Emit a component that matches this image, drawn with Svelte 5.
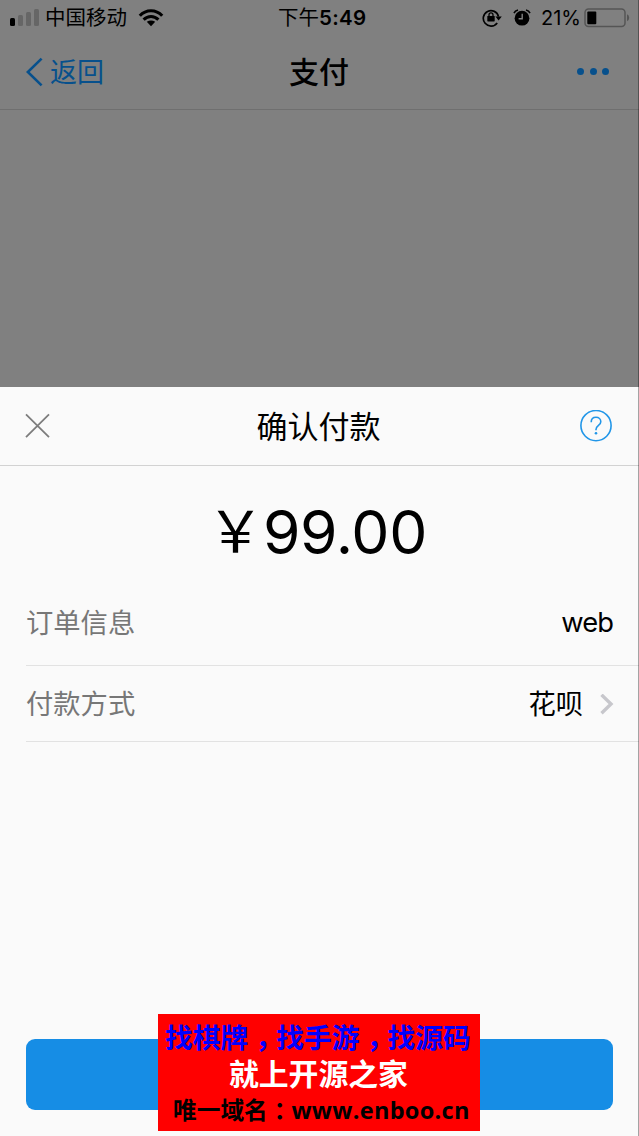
<script lang="ts">
  interface Row {
    label: string;
    value: string;
    link?: boolean;
  }

  const rows: Row[] = [
    { label: '订单信息', value: 'web' },
    { label: '付款方式', value: '花呗', link: true },
  ];

  const bars = [8, 11, 14, 17];
</script>

<div class="screen">
  <div class="backdrop">
    <div class="status">
      <div class="signal">
        {#each bars as height, i}
          <i class:on={i === 0} style="height: {height}px"></i>
        {/each}
      </div>
      <span class="carrier">中国移动</span>
      <svg class="wifi" width="26" height="18" viewBox="0 0 26 18">
        <g fill="none" stroke="#000" stroke-width="3.1">
          <path d="M1.8 6.7C8 0 18 0 24.2 6.7" />
          <path d="M5.6 10.7C10 6.4 16 6.4 20.4 10.7" />
        </g>
        <path d="M8.8 12.8Q13 10 17.2 12.8L13 17.2Z" />
      </svg>
      <span class="time">下午<b>5:49</b></span>
      <svg class="lock" width="20" height="20" viewBox="0 0 20 20">
        <path d="M15.2 14.9A7.7 7.7 0 1 1 16.5 8.6" fill="none" stroke="#000" stroke-width="1.7" />
        <path d="M13.4 8.6h6.4l-3.2 4z" />
        <rect x="5.3" y="8" width="7.4" height="5.4" rx=".6" />
        <path d="M7 8.6V6.8a2 2 0 0 1 4 0v1.8" fill="none" stroke="#000" stroke-width="1.3" />
      </svg>
      <svg class="alarm" width="18" height="18" viewBox="0 0 18 18">
        <circle cx="9" cy="9.2" r="7.4" />
        <path d="M1 4.1Q2 1.6 5 1M17 4.1Q16 1.6 13 1" fill="none" stroke="#000" stroke-width="1.6" />
        <path d="M9.2 4.8v5H5.6" fill="none" stroke="#808080" stroke-width="1.4" />
      </svg>
      <span class="percent">21%</span>
      <svg class="battery" width="46" height="20" viewBox="0 0 46 20">
        <rect x="1" y="1" width="40" height="17.6" rx="3.5" fill="none" stroke="#555" stroke-width="1.5" />
        <rect x="3.3" y="3.5" width="9" height="12.8" rx="1" />
        <path d="M43 6.3Q45.2 7.2 45.2 9.8T43 13.3Z" fill="#555" />
      </svg>
    </div>

    <div class="navbar">
      <div class="back">
        <svg width="18" height="30" viewBox="0 0 18 30">
          <path d="M15.6 1.6 1.8 15 15.6 28.4" fill="none" stroke="#07508c" stroke-width="2.6" />
        </svg>
        <span>返回</span>
      </div>
      <span class="page-title">支付</span>
      <div class="dots"><i></i><i></i><i></i></div>
    </div>
  </div>

  <div class="sheet">
    <div class="sheet-head">
      <svg class="close" width="26" height="26" viewBox="0 0 26 26">
        <path d="M1 1.3 24 24.2M24 1.3 1 24.2" stroke="#7d7d7d" stroke-width="1.8" />
      </svg>
      <span class="sheet-title">确认付款</span>
      <svg class="help" width="32" height="32" viewBox="0 0 32 32">
        <g fill="none" stroke="#2196e8" stroke-width="1.6">
          <circle cx="16" cy="15.6" r="15.1" />
          <path d="M11.2 12.2C11.2 9 13.2 7.3 16 7.3S20.8 9.2 20.8 11.8C20.8 15.6 16 15.4 16 19.6V20.3" />
        </g>
        <circle cx="16" cy="23.3" r="1.3" fill="#2196e8" />
      </svg>
    </div>

    <div class="amount"><span class="yen">￥</span><span class="sum">99.00</span></div>

    {#each rows as row}
      <div class="row" class:link={row.link}>
        <span class="label">{row.label}</span>
        <span class="value">{row.value}</span>
        {#if row.link}
          <svg width="14" height="22" viewBox="0 0 14 22">
            <path d="M1.5 .8 11 10 1.5 19.2" fill="none" stroke="#c7c7cc" stroke-width="3.4" />
          </svg>
        {/if}
      </div>
    {/each}

    <button class="pay" type="button" aria-label="付款"></button>
  </div>

  <div class="promo">
    <div class="promo-find">找棋牌<i>，</i>找手游<i>，</i>找源码</div>
    <div class="promo-name">就上开源之家</div>
    <div class="promo-url">唯一域名<i>：</i><span>www.enboo.cn</span></div>
  </div>
  <div class="edge"></div>
</div>

<style>
  :global(body) {
    background: #fafafa;
  }

  .screen {
    position: relative;
    display: flex;
    flex-direction: column;
    width: 639px;
    height: 1136px;
    overflow: hidden;
    font-family: Inter, 'Noto Sans CJK SC', sans-serif;
    color: #000;
    white-space: nowrap;
  }

  .backdrop {
    height: 387px;
    background: #808080;
  }

  .status {
    display: flex;
    align-items: center;
    height: 35px;
    padding-left: 10px;
    font-size: 20.5px;
    line-height: 36px;
  }

  .signal {
    display: flex;
    align-items: flex-end;
    gap: 3px;
    width: 29px;
    height: 17px;
  }

  .signal i {
    width: 5px;
    border-radius: 1.5px;
    background: #666;
  }

  .signal i.on {
    background: #000;
  }

  .carrier {
    margin-left: 6px;
    width: 82px;
  }

  .wifi {
    margin-left: 11px;
  }

  .time {
    width: 90px;
    margin-left: 114px;
  }

  .time b {
    font-size: 20.5px;
    font-weight: 600;
    letter-spacing: 0.3px;
  }

  .lock {
    margin-left: 114px;
  }

  .alarm {
    margin-left: 11px;
  }

  .percent {
    width: 39px;
    margin-left: 10px;
    font-size: 20px;
  }

  .battery {
    margin-left: 4px;
  }

  .navbar {
    display: grid;
    grid-template-columns: 1fr auto 1fr;
    align-items: center;
    height: 74px;
    border-bottom: 1px solid #6f6f6f;
  }

  .back {
    display: flex;
    align-items: center;
    gap: 6px;
    padding-left: 26px;
    font-size: 27px;
    line-height: 40px;
    color: #07508c;
  }

  .back span {
    padding-top: 1px;
  }

  .page-title {
    margin-right: 1px;
    font-size: 30px;
    font-weight: 500;
    line-height: 40px;
  }

  .dots {
    display: flex;
    justify-content: flex-end;
    gap: 5.5px;
    padding: 0 30px 1px 0;
  }

  .dots i {
    width: 7px;
    height: 7px;
    border-radius: 50%;
    background: #07508c;
  }

  .sheet {
    display: flex;
    flex-direction: column;
    height: 749px;
    background: #fafafa;
  }

  .sheet-head {
    display: grid;
    grid-template-columns: 1fr auto 1fr;
    align-items: center;
    height: 78px;
    padding: 0 27px 0 25px;
    border-bottom: 1px solid #d2d2d2;
  }

  .sheet-title {
    padding-top: 1px;
    font-size: 31px;
    line-height: 44px;
  }

  .help {
    justify-self: end;
  }

  .amount {
    display: flex;
    align-items: center;
    justify-content: center;
    height: 115px;
    padding: 16px 5px 0 0;
    box-sizing: border-box;
    font-size: 60.5px;
    line-height: 80px;
  }

  .yen {
    margin-right: -1px;
    font-size: 57px;
  }

  .sum {
    letter-spacing: -0.3px;
  }

  .row {
    display: flex;
    align-items: center;
    height: 85px;
    margin-left: 26px;
    padding: 2px 26px 0 0;
    box-sizing: border-box;
    border-bottom: 1px solid #e2e2e2;
    font-size: 27.3px;
    line-height: 40px;
  }

  .row:not(.link) .value {
    padding-bottom: 2px;
    letter-spacing: -0.9px;
  }

  .row.link {
    height: 76px;
    padding-right: 25px;
  }

  .label {
    flex: 1;
    color: #777;
  }

  .row svg {
    margin-left: 17px;
  }

  .pay {
    height: 71px;
    margin: auto 26px 26px;
    padding: 0;
    border: 0;
    border-radius: 9px;
    background: #168de5;
  }

  /* banner lies over the pay button */
  .promo {
    position: absolute;
    left: 158px;
    top: 1014px;
    width: 322px;
    height: 117px;
    background: #f00;
    font-family: 'Noto Sans CJK SC', sans-serif;
    font-weight: 700;
  }

  /* half-width punctuation, centred in a full-width cell */
  .promo i {
    display: inline-block;
    width: 1em;
    text-align: center;
    font-style: normal;
    font-feature-settings: 'halt';
  }

  .promo-find {
    padding-left: 7px;
    font-size: 27.8px;
    line-height: 45px;
    color: #00f;
  }

  .promo-name {
    margin-top: -2px;
    padding-left: 71px;
    font-size: 29.8px;
    line-height: 30px;
    color: #fff;
  }

  .promo-url {
    padding-left: 15px;
    font-size: 23.7px;
    line-height: 44px;
  }

  .promo-url span {
    font-family: 'Open Sans', sans-serif;
    font-size: 23.5px;
    letter-spacing: 0.3px;
  }

  .edge {
    position: absolute;
    top: 0;
    right: 0;
    width: 1px;
    height: 100%;
    background: rgba(0, 0, 0, 0.35);
  }
</style>
